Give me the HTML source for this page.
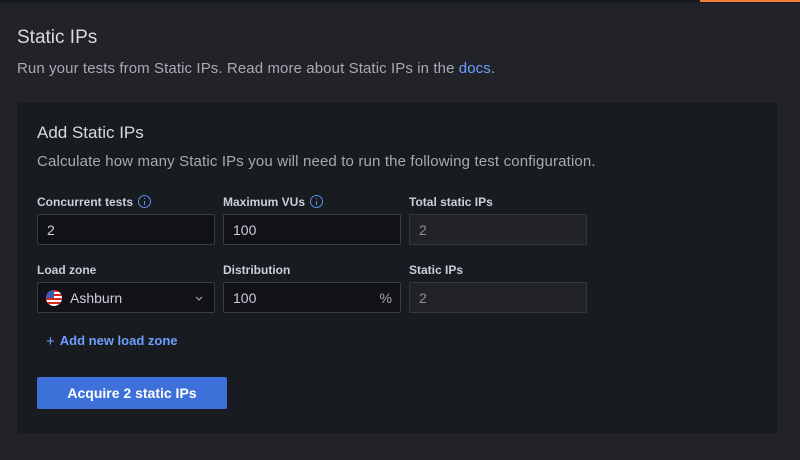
<!DOCTYPE html>
<html><head><style>
*{box-sizing:border-box;margin:0;padding:0}
body{width:800px;height:460px;background:#222329;font-family:"Liberation Sans",sans-serif;position:relative;overflow:hidden;color:#ccccdc}
.a{position:absolute}
.lbl{font-size:12px;font-weight:bold;color:#ccccdc;white-space:nowrap}
.inp{position:absolute;height:31px;width:178px;background:#111217;border:1px solid #3a3c43;border-radius:2px;font-size:14px;color:#ccccdc;padding:7px 0 0 9px}
.dis{background:#222329;color:#8e8e98;border-color:#35373d}
.info{display:inline-block;width:13px;height:13px;border:1.3px solid #5b8ff0;border-radius:50%;vertical-align:-2px;margin-left:5px;position:relative}
.info:after{content:"";position:absolute;left:4.5px;top:4.5px;width:1.4px;height:4px;background:#5b8ff0}
.info:before{content:"";position:absolute;left:4.5px;top:2px;width:1.4px;height:1.4px;background:#5b8ff0}
</style></head><body>
<div class="a" style="left:0;top:0;width:800px;height:3px;background:#181b1f"></div>
<div class="a" style="left:700px;top:0;width:100px;height:2px;background:#f57d3b"></div>
<div class="a" style="left:17px;top:27px;font-size:19px;color:#d8d9e0">Static IPs</div>
<div class="a" style="left:17px;top:60px;font-size:15px;letter-spacing:0.1px;color:#a8a9b3;white-space:nowrap">Run your tests from Static IPs. Read more about Static IPs in the <span style="color:#6e9fff">docs</span>.</div>
<div class="a" style="left:17px;top:103px;width:760px;height:330px;background:#181b1f"></div>
<div class="a" style="left:37px;top:123px;font-size:17px;color:#d8d9e0">Add Static IPs</div>
<div class="a" style="left:37px;top:153px;font-size:15px;letter-spacing:0.15px;color:#a8a9b3;white-space:nowrap">Calculate how many Static IPs you will need to run the following test configuration.</div>
<div class="a lbl" style="left:37px;top:195px">Concurrent tests<span class="info"></span></div>
<div class="a lbl" style="left:223px;top:195px">Maximum VUs<span class="info"></span></div>
<div class="a lbl" style="left:409px;top:195px">Total static IPs</div>
<div class="inp" style="left:37px;top:214px">2</div>
<div class="inp" style="left:223px;top:214px">100</div>
<div class="inp dis" style="left:409px;top:214px">2</div>
<div class="a lbl" style="left:37px;top:263px">Load zone</div>
<div class="a lbl" style="left:223px;top:263px">Distribution</div>
<div class="a lbl" style="left:409px;top:263px">Static IPs</div>
<div class="inp" style="left:37px;top:282px;padding-left:32px">Ashburn
<svg class="a" style="left:8px;top:7px" width="16" height="16" viewBox="0 0 16 16"><defs><clipPath id="c"><circle cx="8" cy="8" r="8"/></clipPath></defs><g clip-path="url(#c)"><rect width="16" height="16" fill="#fff"/><rect y="0" width="16" height="2" fill="#d22"/><rect y="4" width="16" height="2" fill="#d22"/><rect y="8" width="16" height="2" fill="#d22"/><rect y="12" width="16" height="2" fill="#d22"/><rect width="8" height="8" fill="#3b5bb0"/></g></svg>
<svg class="a" style="left:157px;top:13px" width="8" height="5" viewBox="0 0 8 5"><path d="M1 1l3 3 3-3" stroke="#aaa" fill="none" stroke-width="1.1"/></svg></div>
<div class="inp" style="left:223px;top:282px">100<span class="a" style="right:8px;top:7px;color:#aaa">%</span></div>
<div class="inp dis" style="left:409px;top:282px">2</div>
<div class="a" style="left:46px;top:333px;font-size:13px;font-weight:bold;color:#6e9fff;white-space:nowrap"><span style="font-weight:normal;font-size:15px;margin-right:5px;vertical-align:-1px">+</span>Add new load zone</div>
<div class="a" style="left:37px;top:377px;width:190px;height:32px;background:#3d71d9;border-radius:2px;color:#fff;font-size:14px;font-weight:bold;text-align:center;line-height:32px">Acquire 2 static IPs</div>
</body></html>
